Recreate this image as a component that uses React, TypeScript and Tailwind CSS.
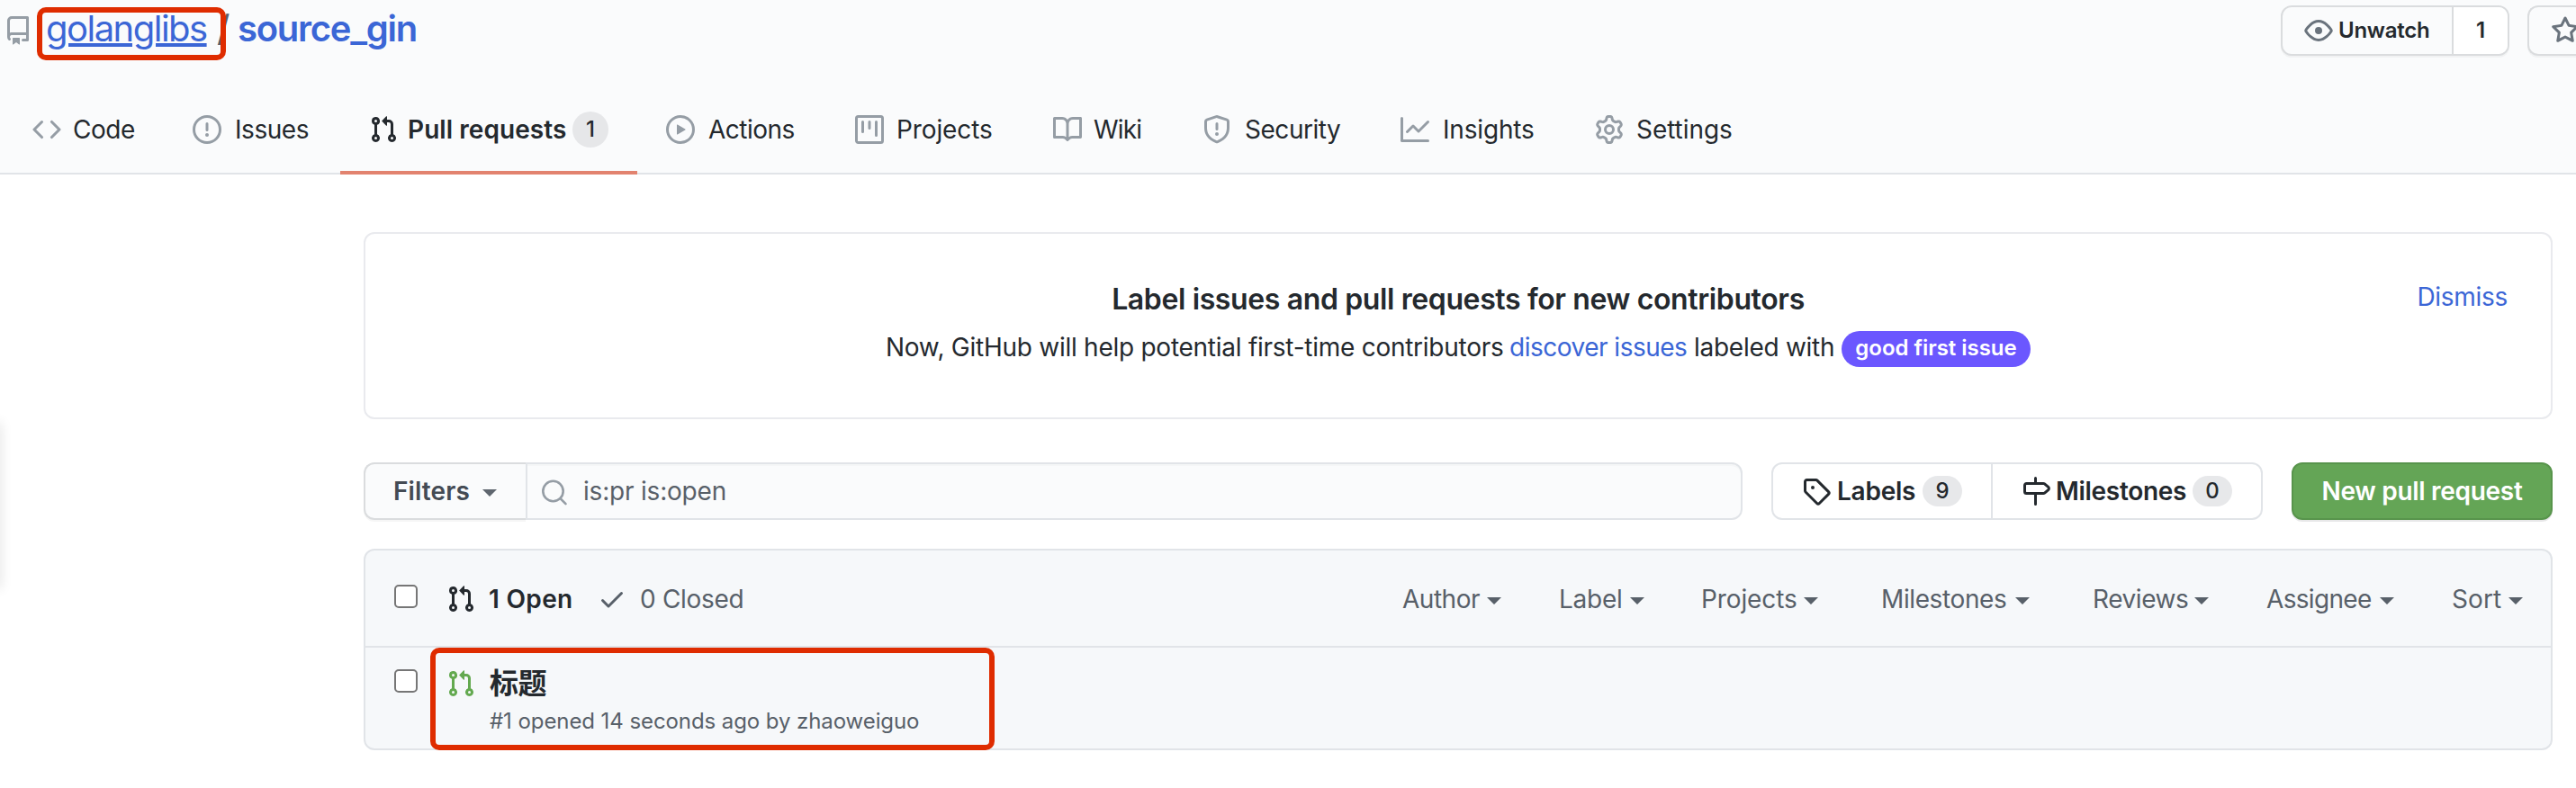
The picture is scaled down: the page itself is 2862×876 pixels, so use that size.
import React from "react";
import clsx from "clsx";

const ICONS = {
  repo: "M2 2.5A2.5 2.5 0 014.5 0h8.75a.75.75 0 01.75.75v12.5a.75.75 0 01-.75.75h-2.5a.75.75 0 110-1.5h1.75v-2h-8a1 1 0 00-.714 1.7.75.75 0 01-1.072 1.05A2.495 2.495 0 012 11.5v-9zm10.5-1V9h-8c-.356 0-.694.074-1 .208V2.5a1 1 0 011-1h8zM5 12.25v3.25a.25.25 0 00.4.2l1.45-1.087a.25.25 0 01.3 0L8.6 15.7a.25.25 0 00.4-.2v-3.25a.25.25 0 00-.25-.25h-3.5a.25.25 0 00-.25.25z",
  code: "M4.72 3.22a.75.75 0 011.06 1.06L2.06 8l3.72 3.72a.75.75 0 11-1.06 1.06L.47 8.53a.75.75 0 010-1.06l4.25-4.25zm6.56 0a.75.75 0 10-1.06 1.06L13.94 8l-3.72 3.72a.75.75 0 101.06 1.06l4.25-4.25a.75.75 0 000-1.06l-4.25-4.25z",
  issue: "M8 1.5a6.5 6.5 0 100 13 6.5 6.5 0 000-13zM0 8a8 8 0 1116 0A8 8 0 010 8zm9 3a1 1 0 11-2 0 1 1 0 012 0zm-.25-6.25a.75.75 0 00-1.5 0v3.5a.75.75 0 001.5 0v-3.5z",
  pull: "M7.177 3.073L9.573.677A.25.25 0 0110 .854v4.792a.25.25 0 01-.427.177L7.177 3.427a.25.25 0 010-.354zM3.75 2.5a.75.75 0 100 1.5.75.75 0 000-1.5zm-2.25.75a2.25 2.25 0 113 2.122v5.256a2.251 2.251 0 11-1.5 0V5.372A2.25 2.25 0 011.5 3.25zM11 2.5h-1V4h1a1 1 0 011 1v5.628a2.251 2.251 0 101.5 0V5A2.5 2.5 0 0011 2.5zm1 10.25a.75.75 0 111.5 0 .75.75 0 01-1.5 0zM3.75 12a.75.75 0 100 1.5.75.75 0 000-1.5z",
  play: "M1.5 8a6.5 6.5 0 1113 0 6.5 6.5 0 01-13 0zM8 0a8 8 0 100 16A8 8 0 008 0zM6.379 5.227A.25.25 0 006 5.442v5.117a.25.25 0 00.379.214l4.264-2.559a.25.25 0 000-.428L6.379 5.227z",
  project: "M1.75 0A1.75 1.75 0 000 1.75v12.5C0 15.216.784 16 1.75 16h12.5A1.75 1.75 0 0016 14.25V1.75A1.75 1.75 0 0014.25 0H1.75zM1.5 1.75a.25.25 0 01.25-.25h12.5a.25.25 0 01.25.25v12.5a.25.25 0 01-.25.25H1.75a.25.25 0 01-.25-.25V1.75zM11.75 3a.75.75 0 00-.75.75v7.5a.75.75 0 001.5 0v-7.5a.75.75 0 00-.75-.75zm-8.25.75a.75.75 0 011.5 0v5.5a.75.75 0 01-1.5 0v-5.5zM8 3a.75.75 0 00-.75.75v3.5a.75.75 0 001.5 0v-3.5A.75.75 0 008 3z",
  book: "M0 1.75A.75.75 0 01.75 1h4.253c1.227 0 2.317.59 3 1.501A3.744 3.744 0 0111.006 1h4.245a.75.75 0 01.75.75v10.5a.75.75 0 01-.75.75h-4.507a2.25 2.25 0 00-1.591.659l-.622.621a.75.75 0 01-1.06 0l-.622-.621A2.25 2.25 0 005.258 13H.75a.75.75 0 01-.75-.75V1.75zm8.755 3a2.25 2.25 0 012.25-2.25H14.5v9h-3.757c-.71 0-1.4.201-1.992.572l.004-7.322zm-1.504 7.324l.004-5.073-.002-2.253A2.25 2.25 0 005.003 2.5H1.5v9h3.757a3.75 3.75 0 011.994.574z",
  shield: "M7.467.133a1.75 1.75 0 011.066 0l5.25 1.68A1.75 1.75 0 0115 3.48V7c0 1.566-.32 3.182-1.303 4.682-.983 1.498-2.585 2.813-5.032 3.855a1.7 1.7 0 01-1.33 0c-2.447-1.042-4.049-2.357-5.032-3.855C1.32 10.182 1 8.566 1 7V3.48a1.75 1.75 0 011.217-1.667l5.25-1.68zm.61 1.429a.25.25 0 00-.153 0l-5.25 1.68a.25.25 0 00-.174.238V7c0 1.358.275 2.666 1.057 3.86.784 1.194 2.121 2.34 4.366 3.297a.2.2 0 00.154 0c2.245-.956 3.582-2.104 4.366-3.298C13.225 9.666 13.5 8.36 13.5 7V3.48a.25.25 0 00-.174-.237l-5.25-1.68zM9 10.5a1 1 0 11-2 0 1 1 0 012 0zm-.25-5.75a.75.75 0 10-1.5 0v3a.75.75 0 001.5 0v-3z",
  graph: "M1.5 1.75a.75.75 0 00-1.5 0v12.5c0 .414.336.75.75.75h14.5a.75.75 0 000-1.5H1.5V1.75zm14.28 2.53a.75.75 0 00-1.06-1.06L10 7.94 7.53 5.47a.75.75 0 00-1.06 0L3.22 8.72a.75.75 0 001.06 1.06L7 7.06l2.47 2.47a.75.75 0 001.06 0l5.25-5.25z",
  gear: "M7.429 1.525a6.593 6.593 0 011.142 0c.036.003.108.036.137.146l.289 1.105c.147.56.55.967.997 1.189.174.086.341.183.501.29.417.278.97.423 1.53.27l1.102-.303c.11-.03.175.016.195.046.219.31.41.641.573.989.014.031.022.11-.059.19l-.815.806c-.411.406-.562.957-.53 1.456a4.588 4.588 0 010 .582c-.032.499.119 1.05.53 1.456l.815.806c.08.08.073.159.059.19a6.494 6.494 0 01-.573.99c-.02.029-.086.074-.195.045l-1.103-.303c-.559-.153-1.112-.008-1.529.27-.16.107-.327.204-.5.29-.449.222-.851.628-.998 1.189l-.289 1.105c-.029.11-.101.143-.137.146a6.613 6.613 0 01-1.142 0c-.036-.003-.108-.037-.137-.146l-.289-1.105c-.147-.56-.55-.967-.997-1.189a4.502 4.502 0 01-.501-.29c-.417-.278-.97-.423-1.53-.27l-1.102.303c-.11.03-.175-.016-.195-.046a6.492 6.492 0 01-.573-.989c-.014-.031-.022-.11.059-.19l.815-.806c.411-.406.562-.957.53-1.456a4.587 4.587 0 010-.582c.032-.499-.119-1.05-.53-1.456l-.815-.806c-.08-.08-.073-.159-.059-.19a6.44 6.44 0 01.573-.99c.02-.029.086-.075.195-.045l1.103.303c.559.153 1.112.008 1.529-.27.16-.107.327-.204.5-.29.449-.222.851-.628.998-1.189l.289-1.105c.029-.11.101-.143.137-.146zM8 0c-.236 0-.47.01-.701.03-.743.065-1.29.615-1.458 1.261l-.29 1.106c-.017.066-.078.158-.211.224a5.994 5.994 0 00-.668.386c-.123.082-.233.09-.3.071L3.27 2.776c-.644-.177-1.392.02-1.82.63a7.977 7.977 0 00-.704 1.217c-.315.675-.111 1.422.363 1.891l.815.806c.05.048.098.147.088.294a6.084 6.084 0 000 .772c.01.147-.038.246-.088.294l-.815.806c-.474.469-.678 1.216-.363 1.891.2.428.436.835.704 1.218.428.609 1.176.806 1.82.63l1.103-.303c.066-.019.176-.011.299.071.213.143.436.272.668.386.133.066.194.158.212.224l.289 1.106c.169.646.715 1.196 1.458 1.26a8.094 8.094 0 001.402 0c.743-.064 1.29-.614 1.458-1.26l.29-1.106c.017-.066.078-.158.211-.224a5.98 5.98 0 00.668-.386c.123-.082.233-.09.3-.071l1.102.302c.644.177 1.392-.02 1.82-.63.268-.382.505-.789.704-1.217.315-.675.111-1.422-.364-1.891l-.814-.806c-.05-.048-.098-.147-.088-.294a6.1 6.1 0 000-.772c-.01-.147.039-.246.088-.294l.814-.806c.475-.469.679-1.216.364-1.891a7.992 7.992 0 00-.704-1.218c-.428-.609-1.176-.806-1.82-.63l-1.103.303c-.066.019-.176.011-.299-.071a5.991 5.991 0 00-.668-.386c-.133-.066-.194-.158-.212-.224L10.16 1.29C9.99.645 9.444.095 8.701.031A8.094 8.094 0 008 0zm1.5 8a1.5 1.5 0 11-3 0 1.5 1.5 0 013 0zM11 8a3 3 0 11-6 0 3 3 0 016 0z",
  eye: "M1.679 7.932c.412-.621 1.242-1.75 2.366-2.717C5.175 4.242 6.527 3.5 8 3.5c1.473 0 2.824.742 3.955 1.715 1.124.967 1.954 2.096 2.366 2.717a.119.119 0 010 .136c-.412.621-1.242 1.75-2.366 2.717C10.825 11.758 9.473 12.5 8 12.5c-1.473 0-2.824-.742-3.955-1.715C2.92 9.818 2.09 8.69 1.679 8.068a.119.119 0 010-.136zM8 2c-1.981 0-3.67.992-4.933 2.078C1.797 5.169.88 6.423.43 7.1a1.619 1.619 0 000 1.798c.45.678 1.367 1.932 2.637 3.024C4.329 13.008 6.019 14 8 14c1.981 0 3.67-.992 4.933-2.078 1.27-1.091 2.187-2.345 2.637-3.023a1.619 1.619 0 000-1.798c-.45-.678-1.367-1.932-2.637-3.023C11.671 2.992 9.981 2 8 2zm0 8a2 2 0 100-4 2 2 0 000 4z",
  star: "M8 .25a.75.75 0 01.673.418l1.882 3.815 4.21.612a.75.75 0 01.416 1.279l-3.046 2.97.719 4.192a.75.75 0 01-1.088.791L8 12.347l-3.766 1.98a.75.75 0 01-1.088-.79l.72-4.194L.818 6.374a.75.75 0 01.416-1.28l4.21-.611L7.327.668A.75.75 0 018 .25zm0 2.445L6.615 5.5a.75.75 0 01-.564.41l-3.097.45 2.24 2.184a.75.75 0 01.216.664l-.528 3.084 2.769-1.456a.75.75 0 01.698 0l2.77 1.456-.53-3.084a.75.75 0 01.216-.664l2.24-2.183-3.096-.45a.75.75 0 01-.564-.41L8 2.694v.001z",
  tag: "M2.5 7.775V2.75a.25.25 0 01.25-.25h5.025a.25.25 0 01.177.073l6.25 6.25a.25.25 0 010 .354l-5.025 5.025a.25.25 0 01-.354 0l-6.25-6.25a.25.25 0 01-.073-.177zm-1.5 0V2.75C1 1.784 1.784 1 2.75 1h5.025c.464 0 .91.184 1.238.513l6.25 6.25a1.75 1.75 0 010 2.474l-5.026 5.026a1.75 1.75 0 01-2.474 0l-6.25-6.25A1.75 1.75 0 011 7.775zM6 5a1 1 0 100 2 1 1 0 000-2z",
  milestone: "M7.75 0a.75.75 0 01.75.75V3h3.634c.414 0 .814.147 1.13.414l2.07 1.75a1.75 1.75 0 010 2.672l-2.07 1.75a1.75 1.75 0 01-1.13.414H8.5v5.25a.75.75 0 11-1.5 0V10H2.75A1.75 1.75 0 011 8.25v-3.5C1 3.784 1.784 3 2.75 3H7V.75A.75.75 0 017.75 0zm0 8.5h4.384a.25.25 0 00.161-.06l2.07-1.75a.25.25 0 000-.38l-2.07-1.75a.25.25 0 00-.161-.06H2.75a.25.25 0 00-.25.25v3.5c0 .138.112.25.25.25h5z",
  check: "M13.78 4.22a.75.75 0 010 1.06l-7.25 7.25a.75.75 0 01-1.06 0L2.22 9.28a.75.75 0 011.06-1.06L6 10.94l6.72-6.72a.75.75 0 011.06 0z",
};

function Icon({ name, className }: { name: keyof typeof ICONS; className?: string }) {
  return (
    <svg viewBox="0 0 16 16" className={clsx("size-8 shrink-0 fill-current", className)} aria-hidden="true">
      <path fillRule="evenodd" clipRule="evenodd" d={ICONS[name]} />
    </svg>
  );
}

function Caret({ className }: { className?: string }) {
  return <span className={clsx("h-0 w-0 shrink-0 border-x-8 border-t-8 border-x-transparent border-t-current", className)} />;
}

function Checkbox({ className }: { className?: string }) {
  return <span role="checkbox" aria-checked="false" className={clsx("size-[26px] shrink-0 rounded-[5px] border-2 border-[#767676] bg-white", className)} />;
}

const TABS: { icon: keyof typeof ICONS; label: string; width: string; text: string; count?: number }[] = [
  { icon: "code", label: "Code", width: "w-[178px]", text: "ml-[13px] tracking-[-0.46px]" },
  { icon: "issue", label: "Issues", width: "w-[196px]", text: "ml-[15px] tracking-[-0.45px]" },
  { icon: "pull", label: "Pull requests", width: "w-[330px]", text: "ml-[11px] w-[183px] font-semibold tracking-[0.07px]", count: 1 },
  { icon: "play", label: "Actions", width: "w-[210px]", text: "ml-[15px] tracking-[-0.5px]" },
  { icon: "project", label: "Projects", width: "w-[220px]", text: "ml-[14px] tracking-[-0.11px]" },
  { icon: "book", label: "Wiki", width: "w-[166px]", text: "ml-[13px] tracking-[-0.8px]" },
  { icon: "shield", label: "Security", width: "w-[220px]", text: "ml-[15px] tracking-[-0.47px]" },
  { icon: "graph", label: "Insights", width: "w-[216px]", text: "ml-[15px] tracking-[-0.18px]" },
  { icon: "gear", label: "Settings", width: "w-[216px]", text: "ml-[14px] tracking-[-0.06px]" },
];

const FILTERS = [
  { label: "Author", width: "w-[174px]", text: "w-[94px] tracking-[-0.48px]" },
  { label: "Label", width: "w-[158px]", text: "w-[79px] tracking-[-0.26px]" },
  { label: "Projects", width: "w-[200px]", text: "w-[114px] tracking-[-0.11px]" },
  { label: "Milestones", width: "w-[235px]", text: "w-[149px] tracking-[-0.39px]" },
  { label: "Reviews", width: "w-[193px]", text: "w-[113px] tracking-[-0.44px]" },
  { label: "Assignee", width: "w-[206px]", text: "w-[126px] tracking-[-0.67px]" },
  { label: "Sort", width: "w-[110px]", text: "w-[63px] tracking-[0.09px]" },
];

function Header() {
  return (
    <header className="relative h-[194px] border-b-2 border-[#e1e4e8] bg-[#fafbfc]">
      <div className="flex h-[68px] items-center">
        <Icon name="repo" className="ml-1 text-[#959da5]" />
        <h1 className="mb-[5px] ml-[15px] flex items-center text-[40px] leading-[48px] text-[#3b66d6]">
          <a className="w-[190px] tracking-[-1.52px] underline decoration-4 underline-offset-[2px]">golanglibs</a>
          <span className="w-[23px] text-[#586069]">/</span>
          <a className="font-semibold tracking-[-1.25px]">source_gin</a>
        </h1>
        <div className="ml-auto flex h-[56px] shrink-0 rounded-[12px] border-2 border-[#dadcde] bg-[#fafbfc] text-[24px] font-[560] text-[#24292e] shadow-[0_2px_0_rgba(27,31,35,0.04)]">
          <div className="flex w-[188px] items-center pl-6">
            <Icon name="eye" className="text-[#6a737d]" />
            <span className="ml-[6px] tracking-[-0.25px]">Unwatch</span>
          </div>
          <div className="flex w-[62px] items-center justify-center rounded-r-[10px] border-l-2 border-[#dadcde] bg-white">1</div>
        </div>
        <div className="ml-5 flex h-[56px] w-[54px] shrink-0 items-center rounded-l-[12px] border-2 border-r-0 border-[#dadcde] bg-[#fafbfc] pl-6 shadow-[0_2px_0_rgba(27,31,35,0.04)]">
          <Icon name="star" className="text-[#6a737d]" />
        </div>
      </div>
      <nav className="mt-[26px] flex h-[100px] pl-1 text-[28px] text-[#24292e]">
        {TABS.map((t) => (
          <a key={t.label} className={clsx("flex h-[100px] shrink-0 items-center border-y-4 border-transparent pl-8", t.width, t.count && "border-b-[#e2836f]")}>
            <Icon name={t.icon} className={t.count ? "text-[#24292e]" : "text-[#959da5]"} />
            <span className={clsx("whitespace-nowrap", t.text)}>{t.label}</span>
            {t.count && <span className="flex size-10 items-center justify-center rounded-full bg-[#e6e7e9] text-[24px] font-medium">{t.count}</span>}
          </a>
        ))}
      </nav>
      <div className="absolute left-[41px] top-[8px] h-[59px] w-[210px] rounded-[10px] border-[6px] border-[#df2c00]" />
    </header>
  );
}

function Banner() {
  return (
    <section className="relative flex h-[208px] flex-col items-center rounded-[12px] border-2 border-[#e9eaee] bg-white pt-[53px] text-[#24292e]">
      <h2 className="text-[32px] font-semibold leading-[40px] tracking-[-0.38px]">Label issues and pull requests for new contributors</h2>
      <p className="mt-[11px] flex h-[44px] items-center text-[28px]">
        <span className="w-[693px] whitespace-nowrap tracking-[-0.26px]">Now, GitHub will help potential first-time contributors</span>
        <a className="w-[205px] whitespace-nowrap tracking-[-0.5px] text-[#3b66d6]">discover issues</a>
        <span className="w-[164px] whitespace-nowrap tracking-[-0.27px]">labeled with</span>
        <span className="mt-[4px] flex h-10 w-[210px] items-center justify-center rounded-full bg-[#6b57ff] pb-[2px] text-[24px] font-[560] tracking-[-0.03px] text-white">good first issue</span>
      </p>
      <a className="absolute right-[48px] top-[50px] text-[28px] leading-[40px] tracking-[-0.3px] text-[#3b66d6]">Dismiss</a>
    </section>
  );
}

function Toolbar() {
  return (
    <div className="mt-12 flex h-16 text-[28px]">
      <button className="flex w-[180px] items-center rounded-l-[12px] border-2 border-r-0 border-[#dadcde] bg-[#fafbfc] pl-[31px] font-[560] text-[#444b54] shadow-[0_2px_0_rgba(27,31,35,0.04)]">
        <span className="w-[99px] text-left tracking-[0.1px]">Filters</span>
        <Caret className="mt-[4px] text-[#5f666f]" />
      </button>
      <div className="flex w-[1352px] items-center rounded-r-[12px] border-2 border-[#e1e4e8] bg-[#fafbfc] shadow-[inset_0_2px_0_rgba(225,228,232,0.2)]">
        <svg viewBox="0 0 30 30" className="ml-[15px] mt-[3px] size-[30px] shrink-0 fill-none stroke-[#959da5] stroke-[2.6]" strokeLinecap="round">
          <circle cx="13.5" cy="13" r="11.2" />
          <path d="M21.5 21.2L27.5 27.2" />
        </svg>
        <span className="ml-[17px] tracking-[-0.2px] text-[#586069]">is:pr is:open</span>
      </div>
      <div className="ml-8 flex w-[546px] rounded-[12px] border-2 border-[#e1e4e8] bg-white font-[560] text-[#24292e]">
        <a className="flex w-[244px] items-center border-r-2 border-[#e1e4e8] pl-8">
          <Icon name="tag" />
          <span className="ml-[7px] w-[95px] tracking-[-0.25px]">Labels</span>
          <span className="flex h-[34px] w-11 items-center justify-center rounded-full bg-[#e7e8ea] text-[24px] font-medium">9</span>
        </a>
        <a className="flex items-center pl-8">
          <Icon name="milestone" />
          <span className="ml-[6px] w-[152px] tracking-[-0.3px]">Milestones</span>
          <span className="flex h-[34px] w-11 items-center justify-center rounded-full bg-[#e7e8ea] text-[24px] font-medium">0</span>
        </a>
      </div>
      <button className="ml-8 w-[290px] rounded-[12px] border-2 border-[#58944c] bg-[#64a556] font-[560] tracking-[-0.3px] text-white shadow-[0_2px_0_rgba(27,31,35,0.1)]">New pull request</button>
    </div>
  );
}

function PullList() {
  return (
    <section className="relative mt-8 h-[224px] rounded-[12px] border-2 border-[#e1e4e8] bg-[#f6f8fa] text-[28px] text-[#586069]">
      <div className="flex h-[108px] items-center border-b-2 border-[#e1e4e8]">
        <Checkbox className="mb-[4px] ml-8" />
        <Icon name="pull" className="ml-8 mt-[2px] text-[#24292e]" />
        <span className="ml-[15px] mt-[2px] w-[121px] font-semibold tracking-[0.31px] text-[#24292e]">1 Open</span>
        <Icon name="check" className="mt-[2px]" />
        <span className="ml-[15px] mt-[2px] tracking-[-0.3px]">0 Closed</span>
        <div className="ml-auto mt-[2px] flex">
          {FILTERS.map((f) => (
            <button key={f.label} className={clsx("flex shrink-0 items-center", f.width)}>
              <span className={clsx("text-left", f.text)}>{f.label}</span>
              <Caret className="mt-[4px]" />
            </button>
          ))}
        </div>
      </div>
      <div className="flex pt-6">
        <Checkbox className="ml-8" />
        <Icon name="pull" className="ml-8 text-[#63a94f]" />
        <div className="ml-4">
          <h3 className="mt-[-9px] font-['Noto_Sans_CJK_SC'] text-[32px] font-bold leading-[44px] tracking-[-0.5px] text-[#24292e]">标题</h3>
          <p className="mt-[6px] text-[24px] leading-[34px] tracking-[-0.08px]">#1 opened 14 seconds ago by zhaoweiguo</p>
        </div>
      </div>
      <div className="absolute left-[72px] top-[108px] h-[114px] w-[627px] rounded-[10px] border-[6px] border-[#df2c00]" />
    </section>
  );
}

export default function App() {
  return (
    <div className="relative h-[876px] w-[2862px] overflow-hidden bg-white font-['Inter','Noto_Sans_CJK_SC',sans-serif]">
      <Header />
      <main className="ml-[404px] mt-16 w-[2432px]">
        <Banner />
        <Toolbar />
        <PullList />
      </main>
      <div className="absolute -left-2 top-[470px] h-[184px] w-2 shadow-[0_0_14px_rgba(0,0,0,0.14)]" />
    </div>
  );
}
